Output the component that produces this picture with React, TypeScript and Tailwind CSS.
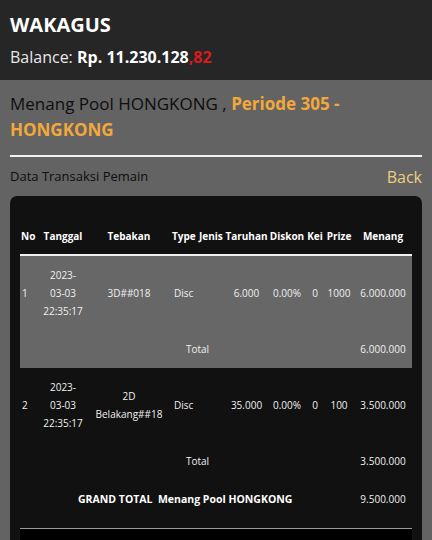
import React from "react";

type Row = {
  no: string;
  date: string[];
  guess: string[];
  type: string;
  bet: string;
  disc: string;
  kei: string;
  prize: string;
  win: string;
  total: string;
  shaded: boolean;
};

const rows: Row[] = [
  {
    no: "1",
    date: ["2023-", "03-03", "22:35:17"],
    guess: ["3D##018"],
    type: "Disc",
    bet: "6.000",
    disc: "0.00%",
    kei: "0",
    prize: "1000",
    win: "6.000.000",
    total: "6.000.000",
    shaded: true,
  },
  {
    no: "2",
    date: ["2023-", "03-03", "22:35:17"],
    guess: ["2D", "Belakang##18"],
    type: "Disc",
    bet: "35.000",
    disc: "0.00%",
    kei: "0",
    prize: "100",
    win: "3.500.000",
    total: "3.500.000",
    shaded: false,
  },
];

const td = "py-[10px] leading-[18px] align-middle";

function Lines({ items }: { items: string[] }) {
  return (
    <>
      {items.map((s, i) => (
        <React.Fragment key={i}>
          {i > 0 && <br />}
          {s}
        </React.Fragment>
      ))}
    </>
  );
}

export default function App() {
  return (
    <div className="min-h-[540px] bg-[#636363] font-['Open_Sans',sans-serif]">
      {/* top bar */}
      <div className="bg-[#262626] px-[10px] pt-[10px] pb-[11px] text-white">
        <div className="text-[20px] font-bold leading-[30px]">WAKAGUS</div>
        <div className="mt-[5px] text-[16px] leading-[24px] text-[#e8e8e8]">
          Balance: <span className="font-bold text-white">Rp. 11.230.128</span>
          <span className="font-bold text-[#d81c1c]">,82</span>
        </div>
      </div>

      <div className="px-[10px]">
        <h1 className="pt-[11px] text-[17px] font-medium leading-[26px] text-[#0e0e0e]">
          Menang Pool HONGKONG ,{" "}
          <span className="font-bold text-[#f3a83b]">Periode 305 - HONGKONG</span>
        </h1>
        <div className="mt-[12px] border-t-2 border-[#f2f2f2]" />

        <div className="mt-[7px] flex h-[26px] items-center justify-between">
          <span className="text-[13px] font-medium text-[#0e0e0e]">Data Transaksi Pemain</span>
          <span className="text-[16px] text-[#eccf7e]">Back</span>
        </div>

        <div className="mt-[6px] rounded-t-[7px] bg-[#111111] px-[10px] pt-[22px] text-[10px] text-[#f0f0f0]">
          <table className="w-[392px] table-fixed border-collapse">
            <colgroup>
              <col className="w-[18px]" />
              <col className="w-[50px]" />
              <col className="w-[82px]" />
              <col className="w-[27px]" />
              <col className="w-[28px]" />
              <col className="w-[43px]" />
              <col className="w-[38px]" />
              <col className="w-[18px]" />
              <col className="w-[30px]" />
              <col className="w-[58px]" />
            </colgroup>
            <thead>
              <tr className="border-b-2 border-[#f0f0f0] text-white">
                <th className="py-[10px] pl-[1px] text-left font-bold leading-4 whitespace-nowrap">No</th>
                <th className="py-[10px] text-center font-bold leading-4">Tanggal</th>
                <th className="py-[10px] text-center font-bold leading-4">Tebakan</th>
                <th className="py-[10px] pl-[2px] text-left font-bold leading-4">Type</th>
                <th className="py-[10px] pl-[2px] text-left font-bold leading-4">Jenis</th>
                <th className="py-[10px] text-center font-bold leading-4">Taruhan</th>
                <th className="py-[10px] text-center font-bold leading-4">Diskon</th>
                <th className="py-[10px] text-center font-bold leading-4">Kei</th>
                <th className="py-[10px] text-center font-bold leading-4">Prize</th>
                <th className="py-[10px] text-center font-bold leading-4">Menang</th>
              </tr>
            </thead>
            <tbody>
              {rows.map((r) => (
                <React.Fragment key={r.no}>
                  <tr className={r.shaded ? "bg-[#676767]" : ""}>
                    <td className={`${td} pl-[2px] text-left`}>{r.no}</td>
                    <td className={`${td} text-center`}>
                      <Lines items={r.date} />
                    </td>
                    <td className={`${td} text-center leading-[17px]`}>
                      <Lines items={r.guess} />
                    </td>
                    <td className={`${td} pl-[4px] text-left`}>{r.type}</td>
                    <td className={td}></td>
                    <td className={`${td} text-center`}>{r.bet}</td>
                    <td className={`${td} text-center`}>{r.disc}</td>
                    <td className={`${td} text-center`}>{r.kei}</td>
                    <td className={`${td} text-center`}>{r.prize}</td>
                    <td className={`${td} text-center`}>{r.win}</td>
                  </tr>
                  <tr className={r.shaded ? "bg-[#676767]" : ""}>
                    <td className={td} colSpan={3}></td>
                    <td className={`${td} text-center`} colSpan={2}>
                      Total
                    </td>
                    <td className={td} colSpan={4}></td>
                    <td className={`${td} text-center`}>{r.total}</td>
                  </tr>
                </React.Fragment>
              ))}
              <tr>
                <td className="pt-[10px] pb-[20px] pl-[58px] text-[10.5px] leading-[18px] font-bold text-white whitespace-nowrap" colSpan={9}>
                  GRAND TOTAL&nbsp;&nbsp;Menang Pool HONGKONG
                </td>
                <td className="pt-[10px] pb-[20px] text-center leading-[18px]">9.500.000</td>
              </tr>
            </tbody>
          </table>
          <div className="h-[20px] border-t border-[#9a9a9a] bg-black" />
        </div>
      </div>
    </div>
  );
}
